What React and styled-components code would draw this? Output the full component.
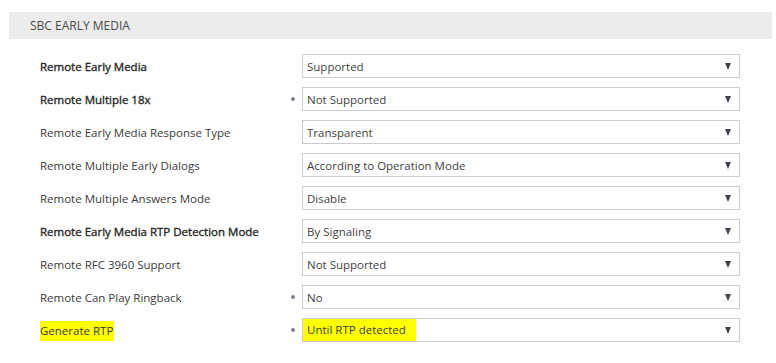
import React from 'react';
import styled, { createGlobalStyle } from 'styled-components';

const GlobalStyle = createGlobalStyle`
    body {
        margin: 0;
        background: #ffffff;
        font-family: "Open Sans", "Liberation Sans", sans-serif;
    }
`;

const Section = styled.div`
    padding: 12px 4px 0 9px;
`;

const Header = styled.div`
    height: 27px;
    background: #ececec;
    display: flex;
    align-items: center;
    padding-left: 21px;
    font-size: 12px;
    color: #4a4a4a;
`;

const Rows = styled.div`
    display: flex;
    flex-direction: column;
    gap: 9px;
    padding: 15px 0 0 31px;
`;

const Row = styled.div`
    display: grid;
    grid-template-columns: 249px 13px 438px;
    align-items: center;
    height: 24px;
`;

// the "bold" labels keep the regular width, only the strokes get heavier
const Label = styled.div`
    font-size: 11.5px;
    color: ${props => props.bold ? '#262626' : '#3b3b3b'};
    -webkit-text-stroke: ${props => props.bold ? '0.35px #262626' : '0'};
`;

const Marker = styled.span`
    ${props => props.highlight ? `
        background: #ffff00;
        padding: 2px 1px 3px 0;
    ` : ''}
`;

const Dot = styled.div`
    width: 4px;
    height: 4px;
    border-radius: 50%;
    background: ${props => props.show ? '#7a8290' : 'transparent'};
    justify-self: start;
    margin-left: 2px;
`;

const Select = styled.div`
    height: 24px;
    box-sizing: border-box;
    border: 1px solid #c9cdd3;
    display: flex;
    align-items: center;
    justify-content: space-between;
    padding: 0 8px 0 4px;
    font-size: 11.5px;
    color: #3f3f3f;
`;

const Value = styled.span`
    ${props => props.highlight ? `
        background: #ffff00;
        padding: 3px 10px 4px 4px;
        margin-left: -4px;
    ` : ''}
`;

const Arrow = styled.span`
    width: 0;
    height: 0;
    border-left: 3.5px solid transparent;
    border-right: 3.5px solid transparent;
    border-top: 7px solid #3d4551;
`;

const params = [
    { label: 'Remote Early Media', value: 'Supported', bold: true },
    { label: 'Remote Multiple 18x', value: 'Not Supported', bold: true, dot: true },
    { label: 'Remote Early Media Response Type', value: 'Transparent' },
    { label: 'Remote Multiple Early Dialogs', value: 'According to Operation Mode' },
    { label: 'Remote Multiple Answers Mode', value: 'Disable' },
    { label: 'Remote Early Media RTP Detection Mode', value: 'By Signaling', bold: true },
    { label: 'Remote RFC 3960 Support', value: 'Not Supported' },
    { label: 'Remote Can Play Ringback', value: 'No', dot: true },
    { label: 'Generate RTP', value: 'Until RTP detected', dot: true, highlight: true },
];

const App = () => {
    return (
        <>
            <GlobalStyle />
            <Section>
                <Header>SBC EARLY MEDIA</Header>
                <Rows>
                    {params.map(p =>
                        <Row key={p.label}>
                            <Label bold={p.bold}>
                                <Marker highlight={p.highlight}>{p.label}</Marker>
                            </Label>
                            <Dot show={p.dot} />
                            <Select>
                                <Value highlight={p.highlight}>{p.value}</Value>
                                <Arrow />
                            </Select>
                        </Row>
                    )}
                </Rows>
            </Section>
        </>
    );
};

export default App;
